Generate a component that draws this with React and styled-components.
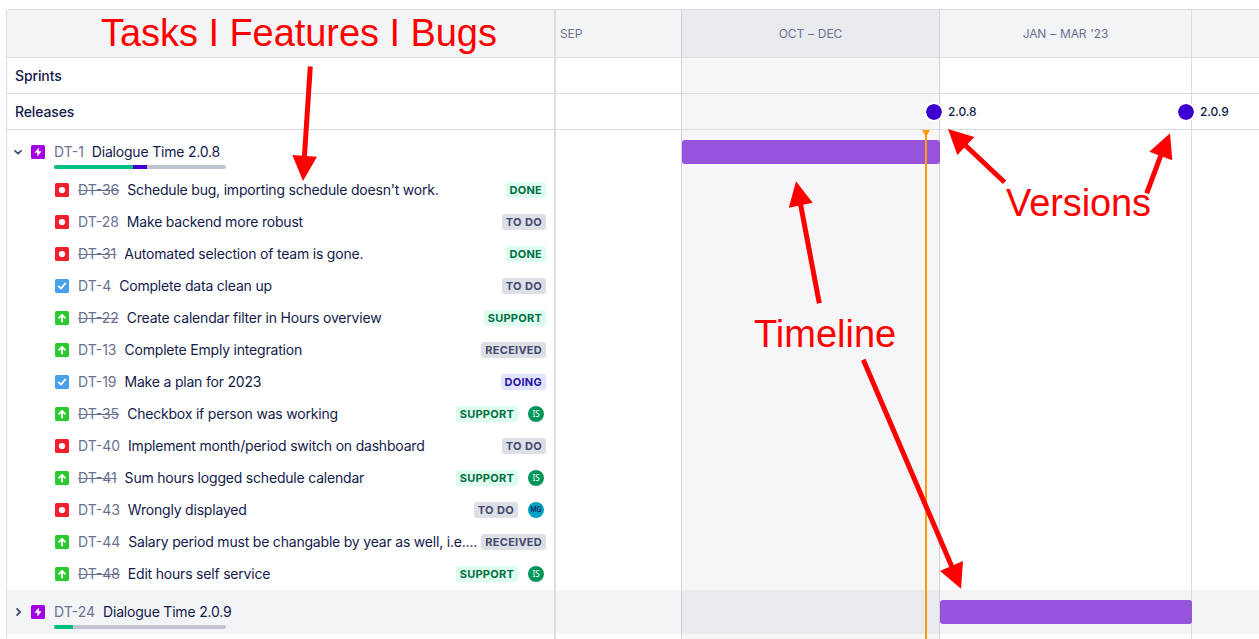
import React from "react";
import styled, { createGlobalStyle, css } from "styled-components";

const GlobalStyle = createGlobalStyle`
  *, *::before, *::after { box-sizing: border-box; }
  html, body { margin: 0; padding: 0; background: #fff; overflow: hidden; }
  body { font-family: Inter, "Liberation Sans", sans-serif; font-size: 14px; color: #131a4a; }
`;

const line = "#dcdde3";
const lineDark = "#cfd0d8";

const Page = styled.main`
  position: relative;
  width: 1259px;
  height: 639px;
  padding: 9px 0 0 6px;
  overflow: hidden;
`;

const Board = styled.section`
  position: relative;
  height: 630px;
  display: flex;
  flex-direction: column;
  border-top: 1px solid ${line};
  border-left: 1px solid ${line};
  border-top-left-radius: 3px;
  overflow: hidden;
`;

const Row = styled.div`
  flex: none;
  display: grid;
  grid-template-columns: 549px 126px 258px 252px 1fr;
  height: ${(p) => p.$h}px;
  background: ${(p) => (p.$shaded ? "#f3f4f6" : "#fff")};
  ${(p) =>
    p.$ruled &&
    css`
      > * { border-bottom: 1px solid ${line}; }
    `}
`;

const ListCell = styled.div`
  display: flex;
  align-items: center;
  min-width: 0;
  padding: 0 8px;
  border-right: 2px solid ${line};
  font-weight: ${(p) => (p.$heading ? 500 : 400)};
  letter-spacing: -0.12px;
`;

const TrackCell = styled.div`
  position: relative;
  display: flex;
  align-items: center;
  justify-content: ${(p) => (p.$start ? "flex-start" : "center")};
  padding-left: ${(p) => (p.$start ? 4 : 0)}px;
  border-right: ${(p) => (p.$last ? "0" : `1px solid ${p.$dark ? lineDark : line}`)};
  background: ${(p) => (p.$current ? "rgba(23, 23, 70, 0.04)" : "transparent")};
  color: #6b7190;
  font-size: 12px;
  letter-spacing: -0.1px;
  word-spacing: 0.6px;
`;

const Bar = styled.div`
  flex: 1;
  align-self: flex-start;
  height: 24px;
  margin: 10px -1px 0 0;
  border-radius: 3px;
  background: #9653db;
  z-index: 1;
`;

const EpicCell = styled.div`
  display: grid;
  grid-template-columns: 24px 23px 1fr;
  grid-template-rows: 35px 4px;
  min-width: 0;
  border-right: 2px solid ${line};
`;

const EpicToggle = styled.div`
  display: flex;
  justify-content: center;
  align-items: center;
  padding: 9px 2px 0 0;
`;

const EpicIconSlot = styled.div`
  display: flex;
  align-items: center;
  padding-top: 9px;
`;

const EpicTitle = styled.div`
  display: flex;
  align-items: center;
  gap: 8px;
  padding-top: 7px;
  white-space: nowrap;
`;

const Progress = styled.div`
  grid-column: 3;
  display: flex;
  width: 172px;
  height: 4px;
  border-radius: 2px;
  overflow: hidden;
  background: #c1c4d0;
`;

const ProgressPart = styled.span`
  width: ${(p) => p.$w}px;
  background: ${(p) => p.$c};
`;

const IssueCell = styled.div`
  display: flex;
  align-items: center;
  min-width: 0;
  padding: 0 8px 0 48px;
  border-right: 2px solid ${line};
  white-space: nowrap;
`;

const TypeIcon = styled.svg`
  flex: none;
  display: block;
  width: 14px;
  height: 14px;
`;

const IssueKey = styled.span`
  color: #6b7190;
  text-decoration: ${(p) => (p.$closed ? "line-through" : "none")};
`;

const IssueTitle = styled.span`
  letter-spacing: -0.2px;
`;

const IssueText = styled.div`
  flex: 1;
  min-width: 0;
  display: flex;
  gap: 8px;
  padding: 0 0 2px 9px;
`;

const badgeTones = {
  green: css`background: #dffcf0; color: #00703f;`,
  grey: css`background: #dedfe5; color: #42496f;`,
  blue: css`background: #dfe5ff; color: #2a14a8;`,
};

const Badge = styled.span`
  height: 16px;
  padding: 0 4px;
  border-radius: 3px;
  font-size: 11px;
  font-weight: 700;
  line-height: 16px;
  letter-spacing: 0.25px;
  word-spacing: 0.6px;
  ${(p) => badgeTones[p.$tone]}
`;

const Avatar = styled.span`
  width: 16px;
  height: 16px;
  margin: 0 2px 0 10px;
  border-radius: 50%;
  background: ${(p) => (p.$who === "MG" ? "#00a3bf" : "#00965a")};
  color: ${(p) => (p.$who === "MG" ? "#172b6d" : "#e4fff2")};
  font: ${(p) => (p.$who === "MG" ? "600 7px/16px Inter" : "500 8px/16px 'Noto Sans'")}, sans-serif;
  text-align: center;
`;

const Release = styled.div`
  position: absolute;
  left: ${(p) => p.$left}px;
  top: 8px;
  z-index: 2;
  display: flex;
  align-items: center;
  gap: 4px;
  color: #131a4a;
  font-size: 12px;
  font-weight: 500;
  line-height: 20px;
`;

const ReleaseDot = styled.span`
  width: 20px;
  height: 20px;
  border: 2px solid #fff;
  border-radius: 50%;
  background: #3d00d1;
  background-clip: padding-box;
`;

const TodayLine = styled.div`
  position: absolute;
  left: 918px;
  top: 120px;
  bottom: 0;
  width: 2px;
  background: #ff9c05;
  z-index: 3;
  &::before {
    content: "";
    position: absolute;
    left: -3px;
    top: 0;
    border: 4px solid transparent;
    border-top: 7px solid #ff9c05;
    border-bottom: 0;
  }
`;

const Arrows = styled.svg`
  position: absolute;
  inset: 0;
  z-index: 4;
  fill: #f00;
  stroke: #f00;
`;

const Note = styled.span`
  position: absolute;
  left: ${(p) => p.$x}px;
  top: ${(p) => p.$y}px;
  z-index: 5;
  color: #f00;
  font: 38px/44px "Liberation Sans", Arial, sans-serif;
  letter-spacing: ${(p) => p.$track || 0}px;
  white-space: nowrap;
`;

const typeColors = { bug: "#f2202e", task: "#47a1ec", story: "#2bca2f", epic: "#a100e6" };

function IssueType({ type }) {
  return (
    <TypeIcon viewBox="0 0 14 14">
      <rect width="14" height="14" rx="1.5" fill={typeColors[type]} />
      {type === "bug" && <circle cx="7" cy="7" r="3.1" fill="#fff" />}
      {type === "task" && (
        <path d="M3.8 7.4 6 9.6 10.2 4.5" fill="none" stroke="#fff" strokeWidth="1.9" strokeLinecap="round" strokeLinejoin="round" />
      )}
      {type === "story" && (
        <path d="M7 10.5V4M4 6.8 7 3.8l3 3" fill="none" stroke="#fff" strokeWidth="1.9" strokeLinecap="round" strokeLinejoin="round" />
      )}
      {type === "epic" && <path d="M7.7 3 3.8 7.6h2.7v3.5l3.8-4.6H7.7z" fill="#fff" stroke="#fff" strokeWidth=".4" strokeLinejoin="round" />}
    </TypeIcon>
  );
}

function Chevron({ open }) {
  return (
    <svg width="12" height="12" viewBox="0 0 12 12" fill="none" stroke="#42496f" strokeWidth="1.8" strokeLinecap="round" strokeLinejoin="round">
      <path d={open ? "M3 4.9 6 7.6 9 4.9" : "M5.1 2.9 8.1 6 5.1 9.1"} />
    </svg>
  );
}

function Track({ first, current, next, later }) {
  return (
    <>
      <TrackCell $start $dark>{first}</TrackCell>
      <TrackCell $current $dark>{current}</TrackCell>
      <TrackCell>{next}</TrackCell>
      <TrackCell $last>{later}</TrackCell>
    </>
  );
}

function Epic({ id, title, open, parts }) {
  return (
    <EpicCell>
      <EpicToggle><Chevron open={open} /></EpicToggle>
      <EpicIconSlot><IssueType type="epic" /></EpicIconSlot>
      <EpicTitle><IssueKey>{id}</IssueKey><IssueTitle>{title}</IssueTitle></EpicTitle>
      <Progress>{parts.map(([w, c]) => <ProgressPart key={c} $w={w} $c={c} />)}</Progress>
    </EpicCell>
  );
}

const issues = [
  ["bug", "DT-36", "Schedule bug, importing schedule doesn't work.", "DONE", true],
  ["bug", "DT-28", "Make backend more robust", "TO DO", false],
  ["bug", "DT-31", "Automated selection of team is gone.", "DONE", true],
  ["task", "DT-4", "Complete data clean up", "TO DO", false],
  ["story", "DT-22", "Create calendar filter in Hours overview", "SUPPORT", true],
  ["story", "DT-13", "Complete Emply integration", "RECEIVED", false],
  ["task", "DT-19", "Make a plan for 2023", "DOING", false],
  ["story", "DT-35", "Checkbox if person was working", "SUPPORT", true, "IS"],
  ["bug", "DT-40", "Implement month/period switch on dashboard", "TO DO", false],
  ["story", "DT-41", "Sum hours logged schedule calendar", "SUPPORT", true, "IS"],
  ["bug", "DT-43", "Wrongly displayed", "TO DO", false, "MG"],
  ["story", "DT-44", "Salary period must be changable by year as well, i.e....", "RECEIVED", false],
  ["story", "DT-48", "Edit hours self service", "SUPPORT", true, "IS"],
];

const tones = { DONE: "green", SUPPORT: "green", "TO DO": "grey", RECEIVED: "grey", DOING: "blue" };

const arrows = [
  { from: [310.3, 66.5], to: [304.3, 158], head: "303,181 292.3,155 317,156.7" },
  { from: [819.3, 303.3], to: [800.5, 204], head: "796,181.3 788.8,207.7 812.7,202.7" },
  { from: [1004.5, 182.3], to: [965, 145], head: "948,129 974.3,137 957.3,155" },
  { from: [1146.7, 193.3], to: [1161, 155], head: "1170,133.3 1149.3,151.7 1172.3,160.3" },
  { from: [863.3, 359.7], to: [952, 567], head: "961,588.7 940,571 963,561" },
];

export default function App() {
  return (
    <Page>
      <GlobalStyle />
      <Board>
        <Row $h={48} $shaded $ruled>
          <ListCell />
          <Track first="SEP" current="OCT – DEC" next="JAN – MAR '23" />
        </Row>
        <Row $h={36} $ruled>
          <ListCell $heading>Sprints</ListCell>
          <Track />
        </Row>
        <Row $h={36} $ruled>
          <ListCell $heading>Releases</ListCell>
          <Track
            current={<Release $left={242}><ReleaseDot />2.0.8</Release>}
            next={<Release $left={236}><ReleaseDot />2.0.9</Release>}
          />
        </Row>
        <Row $h={44}>
          <Epic id="DT-1" title="Dialogue Time 2.0.8" open parts={[[79, "#00bf83"], [14, "#3d00d1"]]} />
          <Track current={<Bar />} />
        </Row>
        {issues.map(([type, id, title, status, closed, who]) => (
          <Row key={id} $h={32}>
            <IssueCell>
              <IssueType type={type} />
              <IssueText><IssueKey $closed={closed}>{id}</IssueKey><IssueTitle>{title}</IssueTitle></IssueText>
              <Badge $tone={tones[status]}>{status}</Badge>
              {who && <Avatar $who={who}>{who}</Avatar>}
            </IssueCell>
            <Track />
          </Row>
        ))}
        <Row $h={44} $shaded>
          <Epic id="DT-24" title="Dialogue Time 2.0.9" parts={[[19, "#00bf83"]]} />
          <Track next={<Bar />} />
        </Row>
        <Row $h={5}>
          <ListCell />
          <Track />
        </Row>
        <TodayLine />
      </Board>
      <Arrows width="1259" height="639" viewBox="0 0 1259 639">
        {arrows.map((a) => (
          <g key={a.head}>
            <line x1={a.from[0]} y1={a.from[1]} x2={a.to[0]} y2={a.to[1]} strokeWidth="5" />
            <polygon points={a.head} stroke="none" />
          </g>
        ))}
      </Arrows>
      <Note $x={101} $y={11} $track={-0.05}>Tasks I Features I Bugs</Note>
      <Note $x={1006} $y={181} $track={-0.1}>Versions</Note>
      <Note $x={754} $y={312}>Timeline</Note>
    </Page>
  );
}
